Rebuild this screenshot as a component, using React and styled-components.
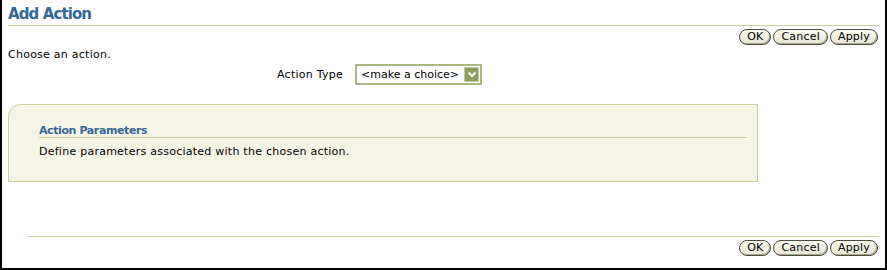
import React from "react";
import styled, { createGlobalStyle } from "styled-components";

const GlobalStyle = createGlobalStyle`
    html, body {
        margin: 0;
        padding: 0;
        background: #ffffff;
    }
    body {
        font-family: "DejaVu Sans", "Liberation Sans", sans-serif;
        font-size: 11px;
        letter-spacing: 0.25px;
        color: #000000;
    }
`;

const Actions = ({footer}) => (
    <ButtonBar footer={footer}>
        <Button>OK</Button>
        <Button>Cancel</Button>
        <Button>Apply</Button>
    </ButtonBar>
);

const App = () => {
    return (
        <>
            <GlobalStyle />
            <Frame>
                <Header>
                    <Title>Add Action</Title>
                </Header>
                <Actions />
                <Instruction>Choose an action.</Instruction>
                <FieldRow>
                    <Label>Action Type</Label>
                    <Select>
                        <span>&lt;make a choice&gt;</span>
                        <Arrow>
                            <svg width="10" height="7" viewBox="0 0 10 7">
                                <path d="M1.5 1.5 L5 5 L8.5 1.5" fill="none" stroke="#ffffff" strokeWidth="2" />
                            </svg>
                        </Arrow>
                    </Select>
                </FieldRow>
                <Panel>
                    <SubHeader>Action Parameters</SubHeader>
                    <PanelText>Define parameters associated with the chosen action.</PanelText>
                </Panel>
                <Footer>
                    <Actions footer />
                </Footer>
            </Frame>
        </>
    );
};

const Frame = styled.div`
    width: 887px;
    height: 270px;
    box-sizing: border-box;
    border: 2px solid #000000;
    border-top: none;
    padding: 0 6px;
    display: flex;
    flex-direction: column;
`;

const Header = styled.div`
    border-bottom: 1px solid #cccc99;
    padding-top: 6px;
    height: 26px;
    box-sizing: border-box;
`;

const Title = styled.h1`
    margin: 0;
    font-family: "DejaVu Sans", sans-serif;
    font-size: 15px;
    font-weight: bold;
    letter-spacing: -0.9px;
    line-height: 17px;
    color: #336699;
`;

const ButtonBar = styled.div`
    display: flex;
    justify-content: flex-end;
    gap: 2px;
    margin-top: 3px;
    padding-right: 1px;
`;

const Button = styled.button`
    height: 16px;
    padding: 0 7px;
    border: 1px solid #4a4a3a;
    border-radius: 8px;
    background: linear-gradient(#fbfbf0, #e6e6d2);
    box-shadow: inset -1px -1px 0 #a8a890;
    font-family: "DejaVu Sans", sans-serif;
    font-size: 11px;
    letter-spacing: 0.2px;
    line-height: 14px;
    color: #000000;
    cursor: pointer;
`;

const Instruction = styled.p`
    margin: 3px 0 0;
    line-height: 14px;
`;

const FieldRow = styled.div`
    display: grid;
    grid-template-columns: 335px auto;
    column-gap: 12px;
    align-items: center;
    margin-top: 2px;
`;

const Label = styled.label`
    text-align: right;
`;

const Select = styled.div`
    width: 127px;
    height: 21px;
    box-sizing: border-box;
    border: 2px solid #a8b880;
    display: flex;
    align-items: center;
    justify-content: space-between;
    padding: 0 1px 0 4px;
    background: #ffffff;
    letter-spacing: 0;
`;

const Arrow = styled.span`
    width: 15px;
    height: 15px;
    box-sizing: border-box;
    border: 1px solid #c2cca2;
    background: #8e9e62;
    display: flex;
    align-items: center;
    justify-content: center;
`;

const Panel = styled.div`
    width: 750px;
    height: 78px;
    box-sizing: border-box;
    margin-top: 19px;
    border: 1px solid #cccc99;
    border-top-left-radius: 12px;
    background: #f5f5e6;
    padding: 19px 10px 0 30px;
`;

const SubHeader = styled.h2`
    margin: 0;
    font-family: "DejaVu Sans", sans-serif;
    font-size: 11px;
    font-weight: bold;
    letter-spacing: -0.4px;
    line-height: 13px;
    color: #336699;
    border-bottom: 1px solid #cccc99;
`;

const PanelText = styled.p`
    margin: 7px 0 0;
    line-height: 14px;
`;

const Footer = styled.div`
    margin-top: auto;
    margin-left: 20px;
    margin-bottom: 12px;
    border-top: 1px solid #cccc99;
`;

export default App;
